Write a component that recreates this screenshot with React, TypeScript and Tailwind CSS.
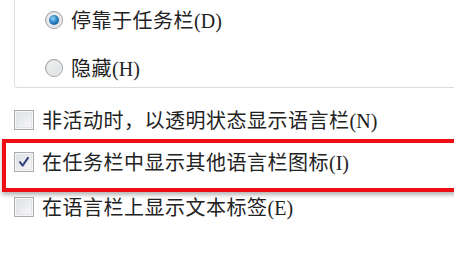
import React from "react";

const cjk = { fontFamily: '"Noto Sans CJK SC", "Noto Sans", sans-serif' };
const serif = { fontFamily: '"Liberation Serif", "DejaVu Serif", serif' };

function Label({ text, k }: { text: string; k: string }) {
  return (
    <span className="text-[20px] leading-[24px] tracking-[0.5px] text-[#222222] whitespace-nowrap" style={cjk}>
      {text}
      <span className="text-[20px] tracking-[0px]" style={serif}>({k})</span>
    </span>
  );
}

function Radio({ checked }: { checked?: boolean }) {
  return (
    <span className="relative flex h-[18px] w-[18px] shrink-0 items-center justify-center rounded-full border border-[#9da1a6] bg-gradient-to-br from-[#d4d6d9] to-[#fbfbfb]">
      <span className="h-[14px] w-[14px] rounded-full bg-gradient-to-br from-[#f2f2f2] to-[#dcdee1] flex items-center justify-center">
        {checked && (
          <span className="h-[10px] w-[10px] rounded-full bg-[radial-gradient(circle_at_40%_35%,#9ad6f6_0%,#2a86c8_45%,#0b3f78_100%)]" />
        )}
      </span>
    </span>
  );
}

function Checkbox({ checked }: { checked?: boolean }) {
  return (
    <span className="flex h-[20px] w-[20px] shrink-0 items-center justify-center border border-[#a9abae] bg-[#f7f7f7]">
      <span className="flex h-[16px] w-[16px] items-center justify-center border border-[#e3e5e8] bg-gradient-to-br from-[#dfe1e4] to-[#f7f7f8]">
        {checked && (
          <svg width="14" height="14" viewBox="0 0 14 14">
            <path d="M3 7.2 L5.6 10.6 L11 2.8" fill="none" stroke="#3a4680" strokeWidth="2.1" strokeLinecap="round" strokeLinejoin="round" />
          </svg>
        )}
      </span>
    </span>
  );
}

export default function App() {
  return (
    <div className="relative h-[267px] w-[454px] overflow-hidden bg-white">
      <div className="ml-[14px] h-[88px] w-[460px] rounded-bl-[4px] border-b border-l border-[#d8dee3] pt-[8px] pl-[30px]">
        <div className="flex h-[24px] items-center gap-[8px]">
          <Radio checked />
          <Label text="停靠于任务栏" k="D" />
        </div>
        <div className="mt-[24px] flex h-[24px] items-center gap-[8px]">
          <Radio />
          <Label text="隐藏" k="H" />
        </div>
      </div>
      <div className="mt-[20px] flex h-[24px] items-center gap-[8px] pl-[14px]">
        <Checkbox />
        <Label text="非活动时，以透明状态显示语言栏" k="N" />
      </div>
      <div className="ml-[2px] mt-[7px] h-[53px] w-[470px] border-[4px] border-[#ee0f14] pl-[8px] pt-[7px] shadow-[0_3px_4px_rgba(0,0,0,0.28)]">
        <div className="flex h-[24px] items-center gap-[8px]">
          <Checkbox checked />
          <Label text="在任务栏中显示其他语言栏图标" k="I" />
        </div>
      </div>
      <div className="mt-[3px] flex h-[24px] items-center gap-[8px] pl-[14px]">
        <Checkbox />
        <Label text="在语言栏上显示文本标签" k="E" />
      </div>
    </div>
  );
}
